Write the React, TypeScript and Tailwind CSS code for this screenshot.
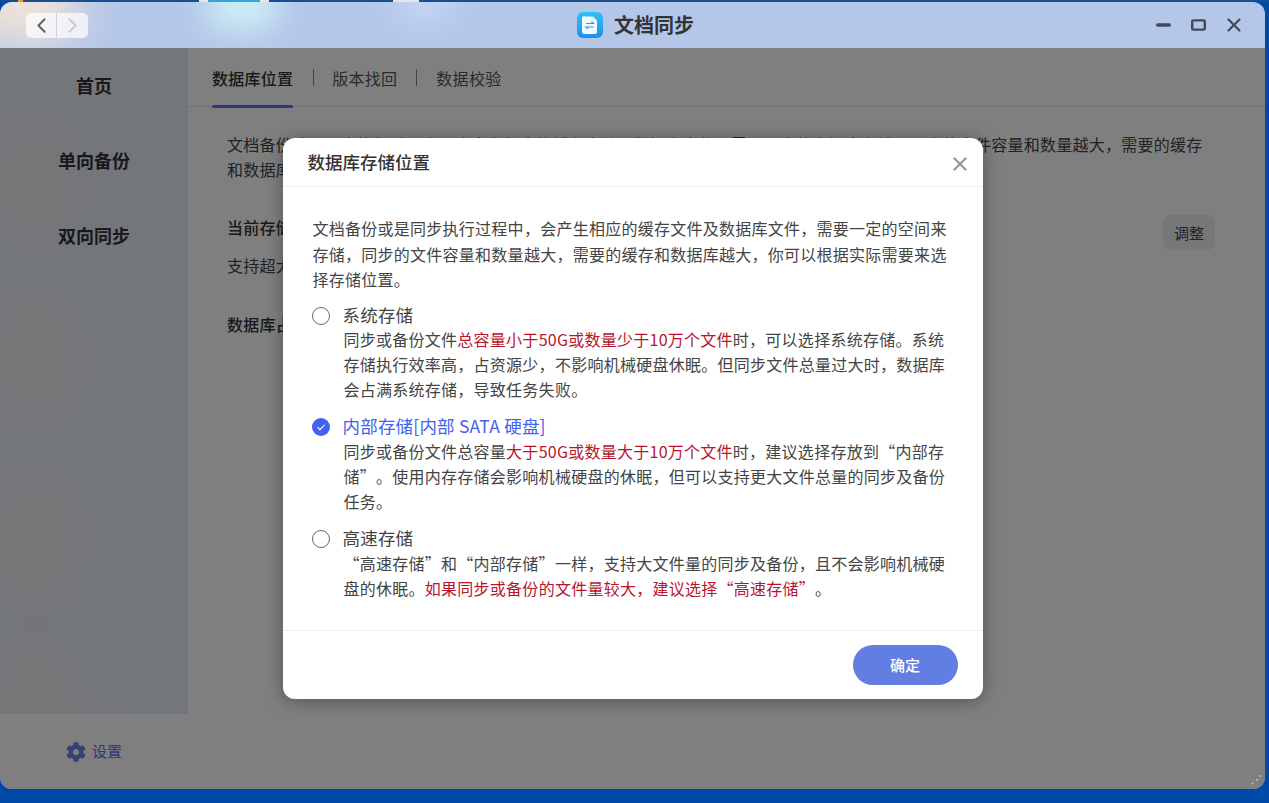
import { ChevronLeft, ChevronRight } from "lucide-react";
import { FaCog } from "react-icons/fa";

const fontStack = { fontFamily: '"Noto Sans CJK SC", "Noto Sans", sans-serif' };

const navItems = ["首页", "单向备份", "双向同步"];

const blobs = [
  "top-[85px] h-[100px]",
  "top-[255px] h-[110px]",
  "top-[435px] h-[110px]",
  "top-[605px] h-[100px]",
];

function Red({ children }: { children: string }) {
  return <span className="text-[#b8142e]">{children}</span>;
}

function AppIcon() {
  return (
    <svg width="26" height="26" viewBox="0 0 26 26">
      <defs>
        <linearGradient id="appBlue" x1="0" y1="0" x2="0" y2="1">
          <stop offset="0" stopColor="#2fc0f5" />
          <stop offset="1" stopColor="#1e90ee" />
        </linearGradient>
      </defs>
      <rect width="26" height="26" rx="6" fill="url(#appBlue)" />
      <path d="M7.5 4.5h8.5l4 4v11a2.5 2.5 0 0 1-2.5 2.5h-10a2.5 2.5 0 0 1-2.5-2.5v-13a2.5 2.5 0 0 1 2.5-2.5z" fill="#f2f9ff" />
      <path d="M9 11.5h7.5l-2-1.8M16.5 15h-7.5l2 1.8" fill="none" stroke="#2a9bee" strokeWidth="1.2" />
    </svg>
  );
}

function CloseIcon() {
  return (
    <svg width="20" height="20" viewBox="0 0 20 20" className="mt-[3px] text-[#909399]">
      <path d="M3.8 3.8l12.4 12.4M16.2 3.8L3.8 16.2" fill="none" stroke="currentColor" strokeWidth="2" />
    </svg>
  );
}

function Radio({ checked }: { checked?: boolean }) {
  if (checked) {
    return (
      <span className="flex h-[18px] w-[18px] items-center justify-center rounded-full bg-[#4361ee]">
        <svg width="12" height="12" viewBox="0 0 12 12">
          <path d="M2.5 6.2l2.4 2.4 4.6-4.8" fill="none" stroke="#fff" strokeWidth="1.1" />
        </svg>
      </span>
    );
  }
  return <span className="block h-[18px] w-[18px] rounded-full border border-[#666]" />;
}

function Option({
  label,
  checked,
  children,
}: {
  label: string;
  checked?: boolean;
  children: React.ReactNode;
}) {
  return (
    <div className="mb-[12.1px] flex">
      <div className="flex h-[25.6px] w-[31px] shrink-0 items-center">
        <Radio checked={checked} />
      </div>
      <div className="min-w-0 flex-1">
        <div className={`text-[17.5px] leading-[24.6px] tracking-[0.2px] ${checked ? "text-[#4361ee]" : "text-[#444]"}`}>
          {label}
        </div>
        <p className="ml-px text-base leading-[25px] tracking-[0.26px] text-[#444] [text-spacing-trim:space-all]">
          {children}
        </p>
      </div>
    </div>
  );
}

export default function App() {
  return (
    <div className="flex h-[803px] w-[1269px] flex-col overflow-hidden bg-[#0049a6]" style={fontStack}>
      <div className="flex h-[2px] shrink-0 bg-[#174f8e]">
        <div className="ml-[18px] h-full w-[5px] bg-[#f09a30]" />
        <div className="ml-[176px] h-full w-[9px] bg-[#e4e8ee]" />
        <div className="h-full w-[52px] bg-[#2fa8d8]" />
        <div className="h-full w-[9px] bg-[#e4e8ee]" />
        <div className="ml-[124px] h-full w-[26px] bg-[#e4e8ee]" />
      </div>
      <div className="mr-[4px] flex h-[787px] shrink-0 flex-col overflow-hidden rounded-xl">
        <header className="relative flex h-[46px] shrink-0 items-center justify-center overflow-hidden bg-[#b4c7e9]">
          <div className="absolute -left-[30px] -top-[30px] h-[70px] w-[110px] rounded-full bg-[#f6e6d6] blur-xl" />
          <div className="absolute left-[205px] -top-[22px] h-[50px] w-[75px] rounded-full bg-[#d0f0f6] blur-lg" />
          <div className="absolute left-[395px] -top-[22px] h-[40px] w-[60px] rounded-full bg-[#c8d8f6] blur-lg" />
          <div className="absolute left-[26px] top-[11px] flex h-[25px] w-[62px] rounded-[5px] bg-white/70">
            <div className="flex w-[31px] items-center justify-center border-r border-[#ccd3df]">
              <ChevronLeft size={25} strokeWidth={1.8} className="text-[#5a5f68]" />
            </div>
            <div className="flex w-[31px] items-center justify-center">
              <ChevronRight size={25} strokeWidth={1.8} className="text-[#c6cbd4]" />
            </div>
          </div>
          <div className="relative flex items-center gap-[11px] pl-[6px]">
            <AppIcon />
            <span className="text-[20px] font-bold text-[#333]">文档同步</span>
          </div>
          <div className="absolute inset-y-0 right-[24px] flex items-center gap-[20px] text-[#3f4a5c]">
            <svg width="15" height="4" viewBox="0 0 15 4">
              <rect width="15" height="3.4" y="0.3" rx="1.7" fill="currentColor" />
            </svg>
            <svg width="15" height="12" viewBox="0 0 15 12">
              <rect x="1.2" y="1.4" width="12.6" height="9.2" rx="1.2" fill="none" stroke="currentColor" strokeWidth="2.4" />
            </svg>
            <svg width="14" height="14" viewBox="0 0 14 14" className="ml-px">
              <path d="M1.5 1.5l11 11M12.5 1.5l-11 11" fill="none" stroke="currentColor" strokeWidth="2.2" strokeLinecap="round" />
            </svg>
          </div>
        </header>

        <div className="relative flex min-h-0 flex-1">
          <aside className="relative flex w-[188px] shrink-0 flex-col bg-white">
            <div className="relative flex-1 overflow-hidden bg-[#e7ecf7]">
              {blobs.map((pos) => (
                <div key={pos} className={`absolute left-[10px] w-[50px] rounded-full bg-[#fdf0d8]/50 blur-xl ${pos}`} />
              ))}
              <nav className="relative -mt-[1px] flex flex-col">
                {navItems.map((item) => (
                  <div key={item} className="flex h-[75px] items-center justify-center text-lg font-bold text-[#333]">
                    {item}
                  </div>
                ))}
              </nav>
            </div>
            <div className="flex h-[75px] shrink-0 items-center justify-center gap-[6px] text-[15px] text-[#5b70ee]">
              <FaCog size={20} className="text-[#6a82e8]" />
              设置
            </div>
          </aside>

          <main className="min-w-0 flex-1 bg-white">
            <div className="flex h-[59px] items-center border-b border-[#e4e4e4] pl-[24px] pt-[1px] text-base tracking-[0.26px] text-[#555]">
              <div className="relative flex h-full items-center font-medium text-[#333]">
                数据库位置
                <div className="absolute inset-x-0 bottom-[-2px] h-[3px] rounded-full bg-[#5871ff]" />
              </div>
              <div className="ml-[20px] mr-[18px] h-[17px] w-px bg-[#888]" />
              版本找回
              <div className="mx-[19px] h-[17px] w-px bg-[#888]" />
              数据校验
            </div>
            <div className="px-[39px] pt-[25px] text-base leading-[25px] tracking-[0.26px] text-[#444]">
              <p className="w-[976px]">
                文档备份或是同步执行过程中，会产生相应的缓存文件及数据库文件，需要一定的空间来存储，同步的文件容量和数量越大，需要的缓存和数据库越大，你可以根据实际需要来选择存储位置。
              </p>
              <div className="mt-[33px] flex h-[35px] w-[988px] items-start justify-between">
                <span className="font-medium text-[#333]">当前存储位置</span>
                <span className="flex h-[35px] w-[52px] items-center justify-center rounded-lg bg-[#eceef2] text-[15px] tracking-normal text-[#444]">
                  调整
                </span>
              </div>
              <p className="mt-[3px]">支持超大文件</p>
              <p className="mt-[34px] font-medium text-[#333]">数据库占用</p>
            </div>
          </main>

          <div className="absolute inset-0 flex items-center justify-center bg-black/50">
            <div className="flex h-[561px] w-[700px] flex-col rounded-xl bg-white shadow-[0_2px_18px_rgba(0,0,0,0.35)]">
              <div className="flex h-[49px] shrink-0 items-center justify-between border-b border-[#eeeeee] pl-[25px] pr-[13px]">
                <span className="mt-[1px] text-[17.5px] font-medium text-[#333]">数据库存储位置</span>
                <CloseIcon />
              </div>
              <div className="min-h-0 flex-1 pl-[29px] pr-[36px] pt-[29px]">
                <p className="-mr-px mb-[10px] ml-px text-base leading-[25.6px] tracking-[0.26px] text-[#444]">
                  文档备份或是同步执行过程中，会产生相应的缓存文件及数据库文件，需要一定的空间来存储，同步的文件容量和数量越大，需要的缓存和数据库越大，你可以根据实际需要来选择存储位置。
                </p>
                <Option label="系统存储">
                  同步或备份文件<Red>总容量小于50G或数量少于10万个文件</Red>
                  时，可以选择系统存储。系统存储执行效率高，占资源少，不影响机械硬盘休眠。但同步文件总量过大时，数据库会占满系统存储，导致任务失败。
                </Option>
                <Option label="内部存储[内部 SATA 硬盘]" checked>
                  同步或备份文件总容量<Red>大于50G或数量大于10万个文件</Red>
                  时，建议选择存放到“内部存储”。使用内存存储会影响机械硬盘的休眠，但可以支持更大文件总量的同步及备份任务。
                </Option>
                <Option label="高速存储">
                  “高速存储”和“内部存储”一样，支持大文件量的同步及备份，且不会影响机械硬盘的休眠。
                  <Red>如果同步或备份的文件量较大，建议选择“高速存储”</Red>。
                </Option>
              </div>
              <div className="flex h-[69px] shrink-0 justify-end border-t border-[#eeeeee] pr-[25px] pt-[14px]">
                <button
                  type="button"
                  className="h-[40px] w-[105px] rounded-full bg-[#627ee0] text-[15px] font-medium text-white"
                >
                  确定
                </button>
              </div>
            </div>
          </div>

          <svg className="absolute bottom-[2px] right-[2px]" width="14" height="14" viewBox="0 0 14 14">
            <circle cx="11.5" cy="3" r="1" fill="#c4c4c8" />
            <circle cx="8" cy="7" r="1" fill="#c4c4c8" />
            <circle cx="3.5" cy="10.5" r="1" fill="#c4c4c8" />
          </svg>
        </div>
      </div>
    </div>
  );
}
